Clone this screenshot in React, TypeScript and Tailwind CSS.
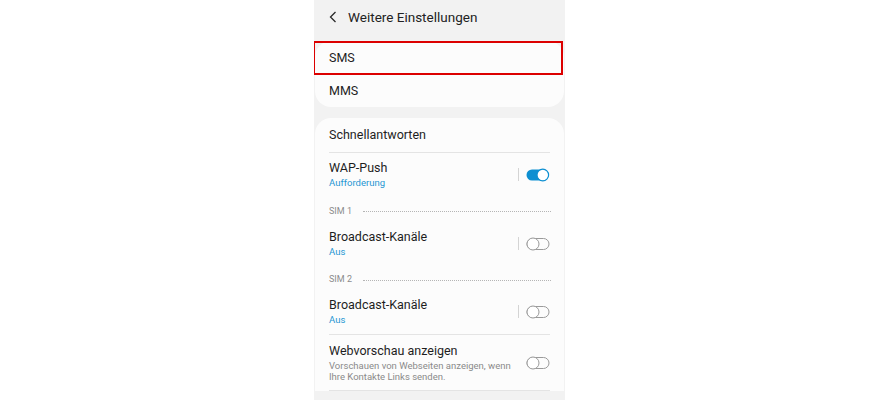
import React from 'react';

const font = { fontFamily: 'Roboto, "Noto Sans", Arial, sans-serif' };

function Toggle({ on }: { on: boolean }) {
  if (on) {
    return (
      <svg width="24" height="14" viewBox="0 0 24 14">
        <rect x="0.5" y="1.5" width="22" height="11" rx="5.5" fill="#0d8fd1" />
        <circle cx="16.8" cy="7" r="5.8" fill="#ffffff" stroke="#0d8fd1" strokeWidth="1.2" />
      </svg>
    );
  }
  return (
    <svg width="24" height="14" viewBox="0 0 24 14">
      <rect x="1" y="1.5" width="22" height="11" rx="5.5" fill="none" stroke="#9a9a9a" strokeWidth="1" />
      <circle cx="7" cy="7" r="6" fill="#ffffff" stroke="#9a9a9a" strokeWidth="1" />
    </svg>
  );
}

function SwitchRow({ title, sub, on, className = '' }: { title: string; sub: string; on: boolean; className?: string }) {
  return (
    <div className={`flex items-center pl-[14px] pr-[14px] ${className}`}>
      <div className="flex-1">
        <p className="text-[12.5px] leading-[16px] text-[#1e1e1e]">{title}</p>
        <p className="text-[9.5px] leading-[13px] text-[#1f96d3]">{sub}</p>
      </div>
      <div className="mr-[7px] h-[13px] w-px bg-[#d4d4d4]" />
      <Toggle on={on} />
    </div>
  );
}

function SimHeader({ label, h }: { label: string; h: string }) {
  return (
    <div className={`flex items-center pl-[14px] pr-[13px] ${h}`}>
      <span className="text-[9px] text-[#8c8c8c]">{label}</span>
      <div className="ml-[11px] flex-1 border-t border-dotted border-[#b5b5b5]" />
    </div>
  );
}

export default function App() {
  return (
    <div className="min-h-[400px] w-full bg-white" style={font}>
      <div className="mx-auto h-[400px] w-[251px] overflow-hidden bg-[#f2f2f2]">
        <div className="flex h-[36px] items-center pb-[2px] pl-[15px]">
          <svg width="8" height="12" viewBox="0 0 8 12" className="mr-[11px]">
            <path d="M6.5 1 L1.5 6 L6.5 11" fill="none" stroke="#2a2a2a" strokeWidth="1.3" />
          </svg>
          <span className="text-[13.5px] text-[#222222]">Weitere Einstellungen</span>
        </div>

        <div className="relative mx-[1px] mt-[5px] rounded-[16px] bg-[#fcfcfc]">
          <div className="flex h-[34px] items-center pl-[14px] pt-[1px] text-[12.5px] text-[#1e1e1e]">SMS</div>
          <div className="flex h-[32px] items-center pl-[14px] pt-[1px] text-[12.5px] text-[#1e1e1e]">MMS</div>
          <div className="absolute left-[-2px] top-0 h-[34px] w-[250px] border-2 border-[#dc0000]" />
        </div>

        <div className="mx-[1px] mt-[11px] rounded-t-[16px] bg-[#fcfcfc]">
          <div className="flex h-[34px] items-center pl-[14px] text-[12.5px] text-[#1e1e1e]">Schnellantworten</div>
          <div className="mx-[14px] h-px bg-[#e4e4e4]" />
          <SwitchRow title="WAP-Push" sub="Aufforderung" on className="pt-[7px] pb-[12px]" />
          <SimHeader label="SIM 1" h="h-[21px]" />
          <SwitchRow title="Broadcast-Kanäle" sub="Aus" on={false} className="pt-[7px] pb-[12px]" />
          <SimHeader label="SIM 2" h="h-[20px]" />
          <SwitchRow title="Broadcast-Kanäle" sub="Aus" on={false} className="pt-[7px] pb-[8px]" />
          <div className="mx-[14px] h-px bg-[#e4e4e4]" />
          <div className="flex items-center pl-[14px] pr-[14px] pt-[8px] pb-[8px]">
            <div className="flex-1">
              <p className="text-[12.5px] leading-[16px] text-[#1e1e1e]">Webvorschau anzeigen</p>
              <p className="mt-[1px] text-[9.5px] leading-[11px] text-[#8a8a8a]">
                Vorschauen von Webseiten anzeigen, wenn
                <br />
                Ihre Kontakte Links senden.
              </p>
            </div>
            <Toggle on={false} />
          </div>
          <div className="mx-[14px] h-px bg-[#e4e4e4]" />
        </div>
      </div>
    </div>
  );
}
